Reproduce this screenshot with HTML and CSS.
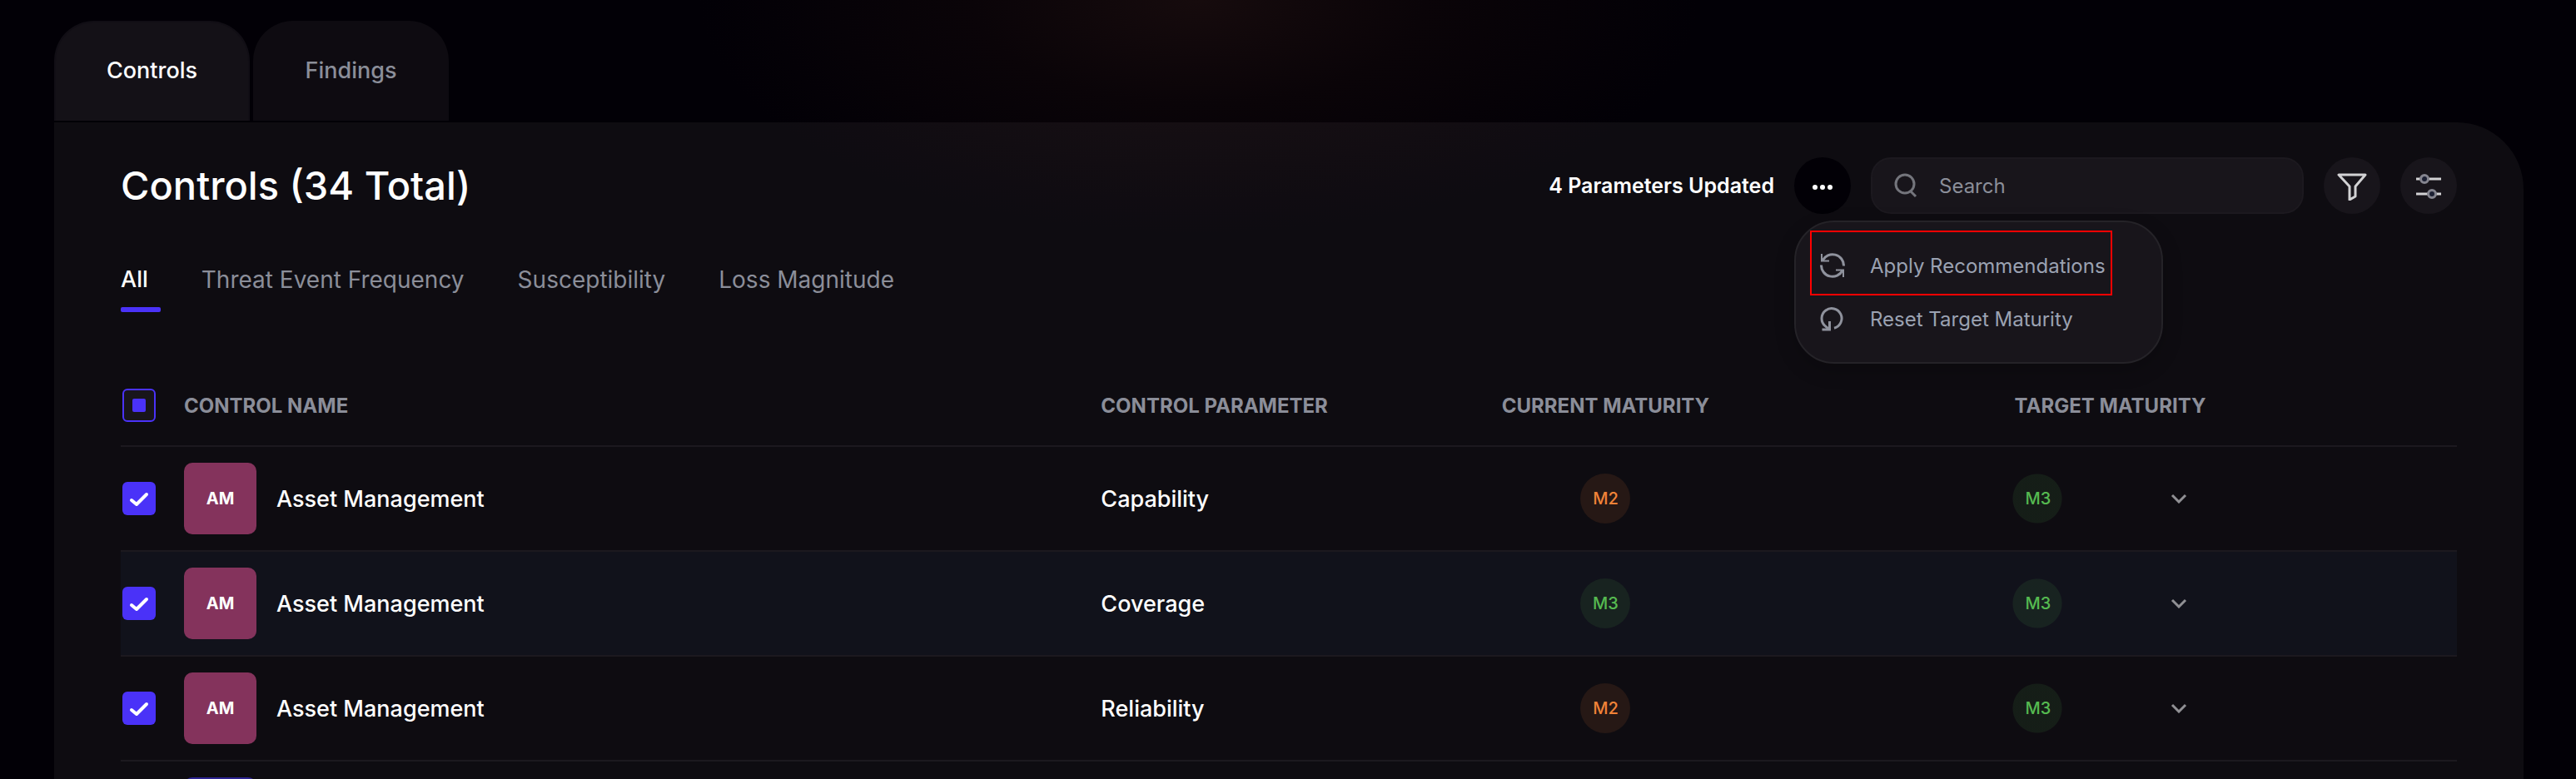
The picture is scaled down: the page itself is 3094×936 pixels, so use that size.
FILE: index.html
```html
<!DOCTYPE html>
<html lang="en">
<head>
  <meta charset="utf-8">
  <title>Controls</title>
  <link rel="stylesheet" href="styles.css">
</head>
<body>

<div class="page">
  <nav class="tabs">
    <a class="tab active" href="#controls">Controls</a>
    <a class="tab" href="#findings">Findings</a>
  </nav>

  <main class="panel" id="controls">
    <header class="toolbar">
      <h1>Controls (34 Total)</h1>
      <span class="updated">4 Parameters Updated</span>
      <div class="more">
        <button class="round dark" type="button" aria-label="More actions">
          <svg width="28" height="28" viewBox="0 0 28 28" fill="#fff"><circle cx="5" cy="16" r="3"/><circle cx="14" cy="16" r="3"/><circle cx="23" cy="16" r="3"/></svg>
        </button>
        <div class="menu">
          <button class="menu-item marked" type="button">
            <svg width="30" height="30" viewBox="0 0 30 30" fill="none" stroke="currentColor" stroke-width="3">
              <path d="M28.500 15.500A13.500 13.500 0 0 0 3 9"/>
              <path d="M1.500 14.500A13.500 13.500 0 0 0 27 21"/>
              <path d="M2 1v8.500h9M28 29v-8.500h-9" stroke-width="2"/>
            </svg>
            Apply Recommendations
          </button>
          <button class="menu-item" type="button">
            <svg width="30" height="30" viewBox="0 0 30 30" fill="none" stroke="currentColor" stroke-width="3">
              <path d="M17 26.200A12 12 0 1 0 6 23.500L10 27"/>
              <path d="M2.500 28h9v-10"/>
            </svg>
            Reset Target Maturity
          </button>
        </div>
      </div>
      <label class="search">
        <svg width="28" height="30" viewBox="0 0 28 30" fill="none" stroke="currentColor" stroke-width="3"><circle cx="13" cy="13" r="11"/><path d="M19 21l7 7"/></svg>
        <input type="search" placeholder="Search" aria-label="Search">
      </label>
      <button class="round" type="button" aria-label="Filter">
        <svg width="36" height="36" viewBox="0 0 36 36" fill="none" stroke="#d2d2d4" stroke-width="3" stroke-linejoin="round"><path d="M2 5h32L22 19v12l-7 4V19z"/></svg>
      </button>
      <button class="round" type="button" aria-label="Settings">
        <svg width="32" height="32" viewBox="0 0 32 32" stroke-width="3"><path d="M1 8h30M1 26h30" stroke="#d2d2d4"/><g fill="#1c2033" stroke="#85858f"><circle cx="11" cy="8" r="4.500"/><circle cx="20" cy="26" r="4.500"/></g></svg>
      </button>
    </header>

    <nav class="filters">
      <a class="active" href="#all">All</a>
      <a href="#frequency">Threat Event Frequency</a>
      <a href="#susceptibility">Susceptibility</a>
      <a href="#magnitude">Loss Magnitude</a>
    </nav>

    <table>
      <colgroup>
        <col class="col-check">
        <col class="col-name">
        <col class="col-parameter">
        <col class="col-current">
        <col class="col-target">
        <col>
      </colgroup>
      <thead>
        <tr>
          <th><span class="check some"><input type="checkbox" aria-label="Select all"></span></th>
          <th>CONTROL NAME</th>
          <th>CONTROL PARAMETER</th>
          <th class="center">CURRENT MATURITY</th>
          <th class="center">TARGET MATURITY</th>
          <th></th>
        </tr>
      </thead>
      <tbody>
        <tr>
          <td><span class="check"><input type="checkbox" aria-label="Select Capability" checked><svg viewBox="0 0 40 40"><path d="M11 22l6 5 12-12"/></svg></span></td>
          <td><div class="name"><span class="avatar">AM</span>Asset Management</div></td>
          <td>Capability</td>
          <td><span class="badge m2">M2</span></td>
          <td>
            <div class="target">
              <select aria-label="Target maturity for Capability"><option>M3</option></select>
              <svg viewBox="0 0 20 12"><path d="M2 2l8 8 8-8"/></svg>
            </div>
          </td>
          <td></td>
        </tr>
        <tr class="hover">
          <td><span class="check"><input type="checkbox" aria-label="Select Coverage" checked><svg viewBox="0 0 40 40"><path d="M11 22l6 5 12-12"/></svg></span></td>
          <td><div class="name"><span class="avatar">AM</span>Asset Management</div></td>
          <td>Coverage</td>
          <td><span class="badge m3">M3</span></td>
          <td>
            <div class="target">
              <select aria-label="Target maturity for Coverage"><option>M3</option></select>
              <svg viewBox="0 0 20 12"><path d="M2 2l8 8 8-8"/></svg>
            </div>
          </td>
          <td></td>
        </tr>
        <tr>
          <td><span class="check"><input type="checkbox" aria-label="Select Reliability" checked><svg viewBox="0 0 40 40"><path d="M11 22l6 5 12-12"/></svg></span></td>
          <td><div class="name"><span class="avatar">AM</span>Asset Management</div></td>
          <td>Reliability</td>
          <td><span class="badge m2">M2</span></td>
          <td>
            <div class="target">
              <select aria-label="Target maturity for Reliability"><option>M3</option></select>
              <svg viewBox="0 0 20 12"><path d="M2 2l8 8 8-8"/></svg>
            </div>
          </td>
          <td></td>
        </tr>
        <tr>
          <td></td>
          <td><div class="name"><span class="avatar blue"></span></div></td>
          <td></td>
          <td></td>
          <td></td>
          <td></td>
        </tr>
      </tbody>
    </table>
  </main>
</div>

</body>
</html>
```

FILE: styles.css
```css
* {
  box-sizing: border-box;
}
body {
  margin: 0;
  background: #020006;
  color: #fff;
  font-family: Inter, "Liberation Sans", sans-serif;
  font-size: 27px;
  font-weight: 500;
}
a {
  color: inherit;
  text-decoration: none;
}
button, input, select {
  font: inherit;
  color: inherit;
  margin: 0;
  padding: 0;
  border: 0;
  background: none;
  outline: none;
  appearance: none;
}
svg {
  display: block;
  flex: none;
}

.page {
  height: 100vh;
  overflow: hidden;
  padding: 25px 63px 0 65px;
  background: radial-gradient(600px 280px at 1440px 0, #160b0d, #0a0408 45%, transparent);
}

.tabs {
  display: flex;
  gap: 4px;
  margin-bottom: 2px;
  color: #8b8e99;
}
.tab {
  width: 235px;
  height: 120px;
  line-height: 120px;
  text-align: center;
  border-radius: 48px 48px 0 0;
  background: #0e0b11;
}
.tab.active {
  color: #fff;
  background: #141117;
  border: 2px solid #110e15;
  border-bottom: 0;
  line-height: 116px;
}

.panel {
  min-height: 100vh;
  padding: 42px 80px 0;
  border-radius: 0 80px 0 0;
  background: rgba(255, 245, 235, 0.05);
}

.toolbar {
  display: flex;
  align-items: center;
  gap: 24px;
}
h1 {
  flex: 1;
  margin: 0;
  font-size: 47px;
  font-weight: 500;
  line-height: 68px;
}
.updated {
  font-size: 25px;
  font-weight: 600;
}
.round {
  display: grid;
  place-items: center;
  width: 68px;
  height: 68px;
  border-radius: 50%;
  background: #18151b;
}
.round.dark {
  background: #020006;
}
.search {
  display: flex;
  align-items: center;
  gap: 26px;
  width: 520px;
  height: 68px;
  padding: 0 26px;
  border: 2px solid #1c191f;
  border-radius: 24px;
  background: #18151b;
  color: #8b8e99;
  font-size: 24px;
  font-weight: 400;
}
.search svg {
  color: #74757c;
}
.search input {
  flex: 1;
  min-width: 0;
}
.search input::placeholder {
  color: #8b8e99;
}

.more {
  position: relative;
}
.menu {
  position: absolute;
  z-index: 1;
  top: 76px;
  left: 0;
  width: 443px;
  padding: 20px 17px;
  border: 2px solid #252328;
  border-radius: 48px;
  background: #18151b;
  box-shadow: 0 8px 24px rgba(0, 0, 0, 0.2);
  color: #9ba2b2;
  font-size: 24px;
  font-weight: 400;
}
.menu-item {
  display: flex;
  align-items: center;
  gap: 30px;
  position: relative;
  width: 363px;
  height: 64px;
  padding-left: 12px;
  white-space: nowrap;
}
.menu-item svg {
  color: #8f929d;
}
/* highlight frame around the entry */
.menu-item.marked::after {
  content: "";
  position: absolute;
  inset: -10px 0 -4px;
  border: 2px solid #f00;
}

.filters {
  display: flex;
  gap: 64px;
  margin: 59px 0 64px;
  color: #8b8e99;
  font-size: 28px;
  font-weight: 400;
  line-height: 40px;
}
.filters a {
  padding-bottom: 19px;
}
.filters .active {
  position: relative;
  color: #fff;
  font-size: 27px;
  font-weight: 500;
}
.filters .active::after {
  content: "";
  position: absolute;
  left: 0;
  bottom: 0;
  width: 48px;
  height: 6px;
  border-radius: 2px;
  background: #4a32f8;
}

table {
  width: 100%;
  table-layout: fixed;
  border-collapse: separate;
  border-spacing: 0;
}
.col-check {
  width: 76px;
}
.col-name {
  width: 39.25%;
}
.col-parameter {
  width: 10.7%;
}
.col-current {
  width: 21.8%;
}
.col-target {
  width: 21.4%;
}
th, td {
  height: 126px;
  padding: 0;
  text-align: left;
  border-bottom: 2px solid #1c191f;
}
th {
  height: 98px;
  color: #8b8e99;
  font-size: 24px;
  font-weight: 700;
  white-space: nowrap;
}
th.center {
  text-align: center;
}
.hover {
  background: #11121b;
}

.check {
  display: grid;
  width: 40px;
  height: 40px;
  margin-left: 2px;
}
.check > * {
  grid-area: 1 / 1;
  width: 40px;
  height: 40px;
}
.check input {
  border-radius: 6px;
  background: #4a32f8;
}
.check svg {
  pointer-events: none;
  fill: none;
  stroke: #fff;
  stroke-width: 4;
  stroke-linecap: round;
  stroke-linejoin: round;
}
.check.some input {
  border: 2px solid #4a32f8;
  background: #18151b;
}
.check.some::after {
  content: "";
  grid-area: 1 / 1;
  place-self: center;
  width: 16px;
  height: 16px;
  border-radius: 2px;
  background: #4a32f8;
}

.name {
  display: flex;
  align-items: center;
  gap: 24px;
}
.avatar {
  width: 87px;
  height: 86px;
  border-radius: 10px;
  background: #84335c;
  font-size: 20px;
  font-weight: 700;
  line-height: 86px;
  text-align: center;
}
.avatar.blue {
  background: #2c2391;
}

.badge {
  display: block;
  width: 60px;
  height: 60px;
  margin: 0 auto;
  border-radius: 50%;
  font-size: 20px;
  line-height: 60px;
  text-align: center;
}
.m2 {
  color: #f08238;
  background: #261815;
}
.m3 {
  color: #55b950;
  background: rgba(85, 185, 80, 0.1);
}

.target {
  display: grid;
  align-items: center;
  width: 236px;
  margin: 0 auto;
}
.target > * {
  grid-area: 1 / 1;
}
.target select {
  height: 60px;
  padding-left: 16px;
  color: #55b950;
  background: radial-gradient(circle at 30px 30px, rgba(85, 185, 80, 0.1) 29px, transparent 30px);
  font-size: 20px;
}
.target svg {
  justify-self: end;
  width: 20px;
  margin-right: 26px;
  pointer-events: none;
  fill: none;
  stroke: #909094;
  stroke-width: 3;
}
```
